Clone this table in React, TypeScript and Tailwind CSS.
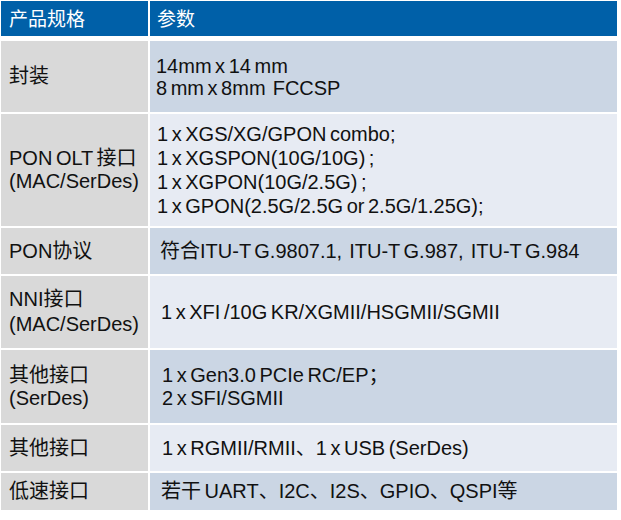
const rows: {
  label: string[];
  lines: string[];
  h: string;
  dark: boolean;
  pad: string;
  lead?: string;
  labelLead?: string;
}[] = [
  { label: ["封装"], lines: ["14mm x 14 mm", "8 mm x 8mm  FCCSP"], h: "h-[71px]", dark: true, pad: "pl-[6px]", lead: "leading-[22px]" },
  {
    label: ["PON OLT 接口", "(MAC/SerDes)"],
    lines: [
      "1 x XGS/XG/GPON combo;",
      "1 x XGSPON(10G/10G) ;",
      "1 x XGPON(10G/2.5G) ;",
      "1 x GPON(2.5G/2.5G or 2.5G/1.25G);",
    ],
    h: "h-[112px]",
    dark: false,
    pad: "pl-[7px]",
    lead: "leading-[24px]",
  },
  { label: ["PON协议"], lines: ["符合ITU-T G.9807.1,  ITU-T G.987,  ITU-T G.984"], h: "h-[46px]", dark: true, pad: "pl-[10px]" },
  {
    label: ["NNI接口", "(MAC/SerDes)"],
    lines: ["1 x XFI /10G KR/XGMII/HSGMII/SGMII"],
    h: "h-[72px]",
    dark: false,
    pad: "pl-[11px]",
    labelLead: "leading-[25px]",
  },
  { label: ["其他接口", "(SerDes)"], lines: ["1 x Gen3.0 PCIe RC/EP；", "2 x SFI/SGMII"], h: "h-[73px]", dark: true, pad: "pl-[12px]" },
  { label: ["其他接口"], lines: ["1 x RGMII/RMII、1 x USB (SerDes)"], h: "h-[46px]", dark: false, pad: "pl-[12px]" },
  { label: ["低速接口"], lines: ["若干 UART、I2C、I2S、GPIO、QSPI等"], h: "h-[37px]", dark: true, pad: "pl-[11px]" },
];

export default function App() {
  return (
    <div
      className="h-[520px] w-[621px] bg-white pl-[1px] pt-[1px] text-[20px] text-[#111] [word-spacing:-2px]"
      style={{ fontFamily: '"Liberation Sans", "Noto Sans CJK SC", sans-serif' }}
    >
      <div className="grid w-[616px] grid-cols-[147px_467px] gap-x-[2px]">
        {/* header */}
        <div className="flex h-[35px] items-center bg-[#0060a8] pl-2 pt-[3px] text-[19px] text-white">产品规格</div>
        <div className="flex h-[35px] items-center bg-[#0060a8] pl-[7px] pt-[3px] text-[19px] text-white">参数</div>
        <div className="col-span-2 h-[5px]" />

        {rows.map((r, i) => (
          <div key={i} className="col-span-2 grid grid-cols-[147px_467px] gap-x-[2px] pb-[2px]">
            <div
              className={`flex flex-col justify-center bg-[#d9d9d9] pl-2 ${r.labelLead ?? "leading-[23px]"} ${r.h}`}
            >
              {r.label.map((l) => (
                <div key={l}>{l}</div>
              ))}
            </div>
            <div
              className={`flex flex-col justify-center ${r.lead ?? "leading-[23px]"} ${r.h} ${r.pad} ${
                r.dark ? "bg-[#cbd6e4]" : "bg-[#e7ebf3]"
              }`}
            >
              {r.lines.map((l) => (
                <div key={l} className="whitespace-pre">
                  {l}
                </div>
              ))}
            </div>
          </div>
        ))}
      </div>
    </div>
  );
}
